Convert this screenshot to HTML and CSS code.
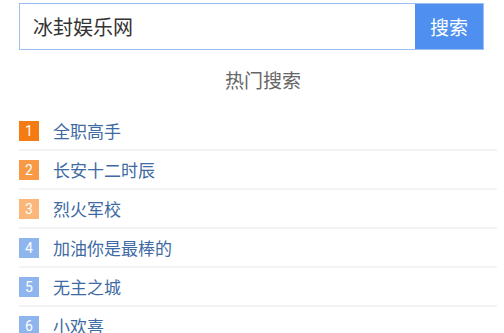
FILE: index.html
```html
<!DOCTYPE html>
<html lang="zh-CN">
<head>
    <meta charset="UTF-8">
    <meta name="viewport" content="width=device-width, initial-scale=1.0">
    <title>热门搜索</title>
    <link rel="stylesheet" href="styles.css">
</head>
<body>
    <div class="search-bar">
        <div class="search-input">冰封娱乐网</div>
        <button class="search-btn">搜索</button>
    </div>

    <div class="hot">
        <div class="hot-title">热门搜索</div>
        <ul class="hot-list">
            <li class="hot-item"><span class="rank rank-1">1</span><a href="#">全职高手</a></li>
            <li class="hot-item"><span class="rank rank-2">2</span><a href="#">长安十二时辰</a></li>
            <li class="hot-item"><span class="rank rank-3">3</span><a href="#">烈火军校</a></li>
            <li class="hot-item"><span class="rank">4</span><a href="#">加油你是最棒的</a></li>
            <li class="hot-item"><span class="rank">5</span><a href="#">无主之城</a></li>
            <li class="hot-item"><span class="rank">6</span><a href="#">小欢喜</a></li>
        </ul>
    </div>
</body>
</html>
```

FILE: styles.css
```css
body {
    font-family: Roboto, "Noto Sans CJK SC", sans-serif;
    color: #333;
    margin: 0;
    background: #fff;
}
.search-bar {
    display: flex;
    height: 47px;
    margin: 3px 20px 0 19px;
    border: 1px solid #9dc0f3;
    box-sizing: border-box;
}
.search-input {
    flex: 1;
    display: flex;
    align-items: center;
    padding-left: 13px;
    font-size: 20px;
    color: #333;
}
.search-btn {
    width: 68px;
    border: none;
    background-color: #4e8ff0;
    color: #fff;
    font-family: inherit;
    font-size: 19px;
    padding: 0;
}
.hot {
    padding: 0 7px 0 19px;
}
.hot-title {
    text-align: center;
    padding: 2px 0 0 10px;
    height: 60px;
    line-height: 60px;
    font-size: 19px;
    color: #666;
}
.hot-list {
    list-style: none;
    margin: 0;
    padding: 0;
}
.hot-item {
    display: flex;
    align-items: center;
    height: 37px;
    border-bottom: 2px solid #f3f3f3;
}
.rank {
    width: 20px;
    height: 20px;
    line-height: 20px;
    text-align: center;
    font-size: 14px;
    color: #fff;
    background-color: #8fb5ee;
    margin-right: 14px;
}
.rank-1 {
    background-color: #f57b14;
}
.rank-2 {
    background-color: #f89a45;
}
.rank-3 {
    background-color: #fbb67a;
}
.hot-item a {
    color: #3e6aa3;
    font-size: 17px;
    text-decoration: none;
}
```
